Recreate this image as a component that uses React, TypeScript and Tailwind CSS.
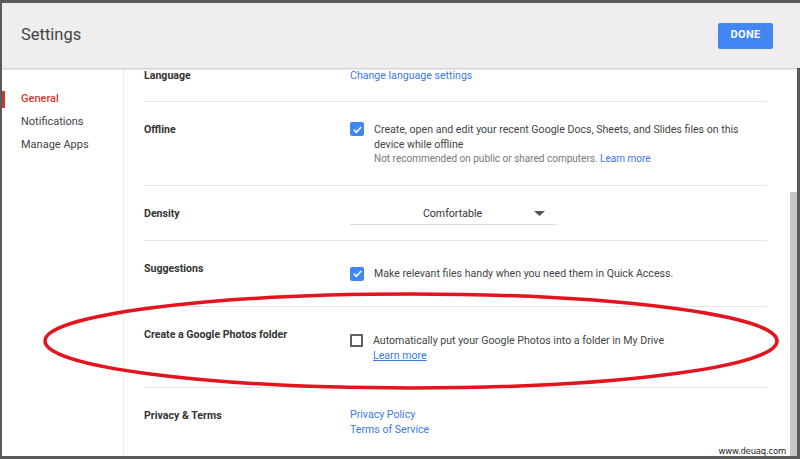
import { ReactNode } from 'react'

const font = { fontFamily: 'Roboto, "Noto Sans", Arial, sans-serif' }

function Checkbox({ checked }: { checked: boolean }) {
  if (!checked) {
    return (
      <span className="mt-[1px] block h-[13px] w-[13px] shrink-0 rounded-[1px] border-2 border-[#5f5f5f] bg-white" />
    )
  }

  return (
    <span className="flex h-[14px] w-[14px] shrink-0 items-center justify-center rounded-[2px] bg-[#4285f4]">
      <svg width="11" height="11" viewBox="0 0 12 12">
        <path d="M2 6.2 L4.8 9 L10 3.2" fill="none" stroke="white" strokeWidth="1.8" />
      </svg>
    </span>
  )
}

function Row({ label, children, height, last }: { label: string; children: ReactNode; height: string; last?: boolean }) {
  return (
    <div className={`flex ${height} ${last ? '' : 'border-b border-[#e6e6e6]'} pt-5`}>
      <div className="w-[206px] shrink-0 text-[10.6px] font-bold leading-[15px] text-[#333]">
        {label}
      </div>
      <div className="flex-1">
        {children}
      </div>
    </div>
  )
}

function SideItem({ children, active }: { children: ReactNode; active?: boolean }) {
  return (
    <div className="relative flex h-[23px] items-center pl-[19px]">
      {active && (
        <span className="absolute left-0 top-[3px] h-[17px] w-[3px] bg-[#c5392c]" />
      )}
      <span className={active ? 'text-[11px] font-medium text-[#d2392c]' : 'text-[11px] text-[#444]'}>
        {children}
      </span>
    </div>
  )
}

export default function App() {
  return (
    <div
      className="relative flex h-[459px] w-[800px] flex-col overflow-hidden border-b-[3px] border-l-2 border-t-[3px] border-[#5a5a5a] bg-white"
      style={font}
    >
      <header className="z-10 flex h-[65px] shrink-0 items-center justify-between bg-[#eeeeee] pl-[19px] pr-[27px] shadow-[0_1px_2px_rgba(0,0,0,0.25)]">
        <h1 className="text-[16.5px] leading-none text-[#444]">
          Settings
        </h1>
        <button className="h-[26px] w-[55px] rounded-[2px] bg-[#4285f4] text-[11px] font-bold tracking-wide text-white">
          DONE
        </button>
      </header>

      <div className="flex flex-1">
        <aside className="w-[122px] shrink-0 border-r border-[#ececec] pt-[20px]">
          <SideItem active>General</SideItem>
          <SideItem>Notifications</SideItem>
          <SideItem>Manage Apps</SideItem>
        </aside>

        <main className="flex-1 pl-5 pr-[23px] text-[10.6px] text-[#444]">
          <div className="flex h-[34px] border-b border-[#e6e6e6]">
            <div className="w-[206px] shrink-0 text-[10.6px] font-bold leading-[15px] text-[#333]">
              Language
            </div>
            <div className="leading-[15px] text-[#3b78e7]">
              Change language settings
            </div>
          </div>

          <Row label="Offline" height="h-[84px]">
            <div className="flex gap-[10px]">
              <Checkbox checked />
              <div className="leading-[15px]">
                <p>Create, open and edit your recent Google Docs, Sheets, and Slides files on this</p>
                <p>device while offline</p>
                <p className="text-[10px] leading-[14px] text-[#777]">
                  Not recommended on public or shared computers. <span className="text-[#3b78e7]">Learn more</span>
                </p>
              </div>
            </div>
          </Row>

          <Row label="Density" height="h-[55px]">
            <div className="relative flex h-[19px] w-[207px] items-start justify-center border-b border-[#dcdcdc] pr-[2px]">
              <span className="leading-[15px] text-[#333]">Comfortable</span>
              <svg className="absolute right-[12px] top-[5px]" width="11" height="5" viewBox="0 0 11 5">
                <path d="M0 0 L11 0 L5.5 5 Z" fill="#555" />
              </svg>
            </div>
          </Row>

          <Row label="Suggestions" height="h-[66px]">
            <div className="flex items-center gap-[10px] pt-[5px]">
              <Checkbox checked />
              <span className="leading-[15px]">Make relevant files handy when you need them in Quick Access.</span>
            </div>
          </Row>

          <Row label="Create a Google Photos folder" height="h-[81px]">
            <div className="flex gap-[10px] pt-[6px]">
              <Checkbox checked={false} />
              <div className="leading-[15px]">
                <p>Automatically put your Google Photos into a folder in My Drive</p>
                <p className="text-[#3b78e7] underline">Learn more</p>
              </div>
            </div>
          </Row>

          <Row label="Privacy & Terms" height="h-[70px]" last>
            <div className="-mt-[1px] leading-[15px] text-[#3b78e7]">
              <p>Privacy Policy</p>
              <p>Terms of Service</p>
            </div>
          </Row>
        </main>

        <div className="flex w-[10px] shrink-0 flex-col border-r-[3px] border-[#5a5a5a] pt-[124px]">
          <div className="flex-1 bg-[#c6c6c6]" />
        </div>
      </div>

      <svg className="pointer-events-none absolute left-[-2px] top-[-3px]" width="800" height="459">
        <ellipse cx="411" cy="341" rx="366" ry="47" fill="none" stroke="#e3141d" strokeWidth="3.5" />
      </svg>

      <span className="absolute bottom-[1px] right-[14px] text-[8.5px] leading-none tracking-tight text-[#222]" style={{ fontFamily: '"DejaVu Sans", sans-serif' }}>
        www.deuaq.com
      </span>
    </div>
  )
}
